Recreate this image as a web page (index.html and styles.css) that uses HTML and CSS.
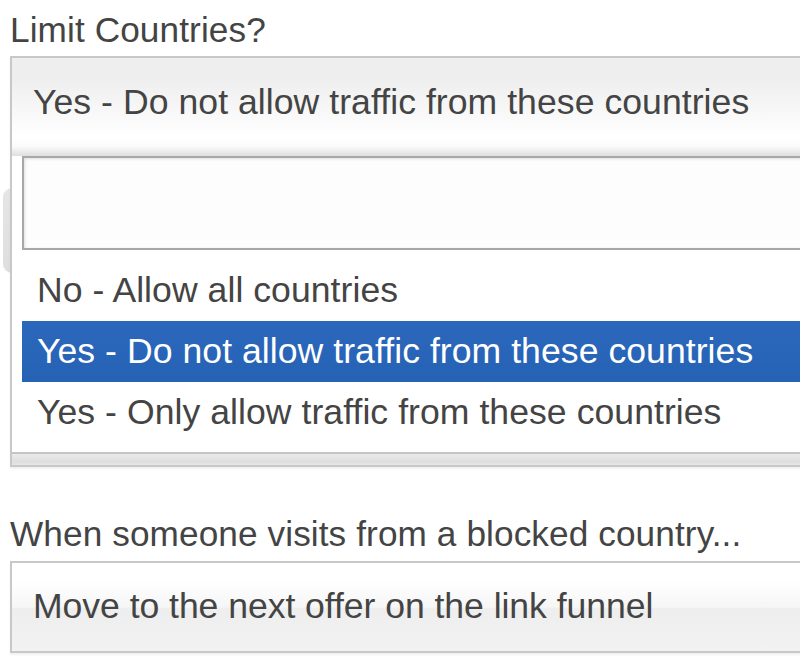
FILE: index.html
```html
<!DOCTYPE html>
<html>
<head>
<meta charset="utf-8">
<link rel="stylesheet" href="styles.css">
</head>
<body>
<div class="page">
  <div class="backdrop-tab"></div>
  <label class="field-label">Limit Countries?</label>
  <div class="chosen chosen-active">
    <div class="chosen-single">Yes - Do not allow traffic from these countries</div>
    <div class="chosen-drop">
      <div class="chosen-search"><input class="search-input" type="text"></div>
      <ul class="chosen-results">
        <li class="result">No - Allow all countries</li>
        <li class="result highlighted">Yes - Do not allow traffic from these countries</li>
        <li class="result">Yes - Only allow traffic from these countries</li>
      </ul>
      <div class="drop-foot"></div>
    </div>
  </div>
  <label class="field-label second">When someone visits from a blocked country...</label>
  <div class="chosen">
    <div class="chosen-single plain">Move to the next offer on the link funnel</div>
  </div>
</div>
</body>
</html>
```

FILE: styles.css
```css
html, body {
  margin: 0;
  padding: 0;
  overflow: hidden;
  background: #fff;
}
body {
  width: 800px;
  height: 660px;
  font-family: "Liberation Sans", Arial, Helvetica, sans-serif;
  color: #444;
}
.page {
  position: relative;
  box-sizing: border-box;
  width: 800px;
  height: 660px;
  overflow: hidden;
  padding: 10px 0 0 10px;
}
.backdrop-tab {
  position: absolute;
  left: 3px;
  top: 188px;
  width: 14px;
  height: 85px;
  border-radius: 9px 0 0 9px;
  background: linear-gradient(#e6e6e6, #dedede);
  z-index: 0;
}
.field-label {
  display: block;
  font-size: 35.2px;
  line-height: 40px;
  height: 40px;
  margin-bottom: 6px;
  white-space: nowrap;
  letter-spacing: 0.1px;
}
.field-label.second {
  margin-top: 47px;
  margin-bottom: 7px;
}
.chosen {
  position: relative;
  z-index: 1;
  width: 830px;
  border: 2px solid #c8c8c8;
  border-right: none;
  background: #fff;
  box-shadow: 0 2px 2px rgba(0, 0, 0, 0.06);
}
.chosen-single {
  box-sizing: border-box;
  height: 98px;
  padding: 24px 0 0 21px;
  font-size: 35.6px;
  line-height: 40px;
  white-space: nowrap;
  letter-spacing: 0.05px;
  background: linear-gradient(#eeeeee 20%, #ffffff 80%, #fbfbfb 90%, #dedede 100%);
}
.chosen-single.plain {
  height: 88px;
  padding-top: 23px;
  letter-spacing: -0.05px;
  background: linear-gradient(#ffffff 20%, #f6f6f6 50%, #eeeeee 52%, #f2f2f2 100%);
}
.chosen-drop {
  background: #fff;
}
.chosen-search {
  padding-left: 10px;
}
.search-input {
  display: block;
  box-sizing: border-box;
  width: 820px;
  height: 94px;
  margin: 0;
  border: 2px solid #a8a8a8;
  border-right: none;
  border-radius: 0;
  background: #fdfdfd;
  box-shadow: inset 1px 1px 3px rgba(0, 0, 0, 0.12);
  outline: none;
}
.chosen-results {
  list-style: none;
  margin: 0 0 0 10px;
  padding: 10px 0 9px 0;
}
.result {
  height: 61px;
  padding-left: 15px;
  font-size: 35.6px;
  line-height: 61px;
  white-space: nowrap;
  letter-spacing: 0.05px;
  color: #444;
}
.result.highlighted {
  color: #fff;
  background: linear-gradient(#2b67bb, #2662b4);
}
.drop-foot {
  height: 11px;
  border-top: 2px solid #c4c4c4;
  background: linear-gradient(#eaeaea, #dfdfdf 70%, #e6e6e6);
}
```
